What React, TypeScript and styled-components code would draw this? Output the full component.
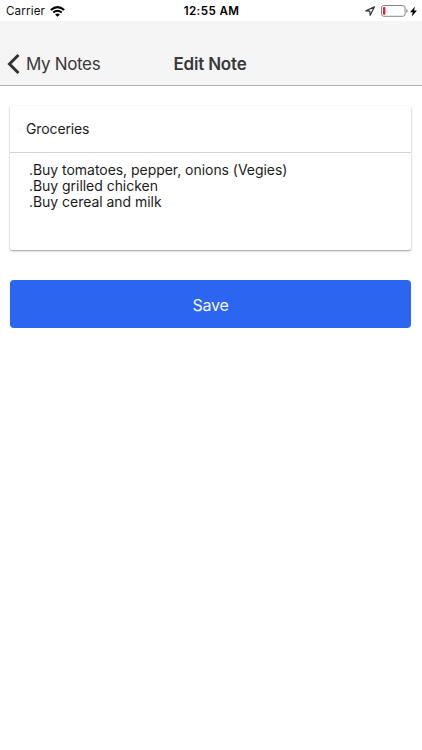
import React from "react";
import styled, { createGlobalStyle } from "styled-components";

const GlobalStyle = createGlobalStyle`
  * { box-sizing: border-box; }
  html, body { margin: 0; background: #fff; }
  body { font-family: Inter, "Liberation Sans", sans-serif; color: #1c1c1c; overflow: hidden; }
  button, input, textarea { font: inherit; color: inherit; letter-spacing: inherit; }
`;

const Screen = styled.div`
  width: 422px;
  height: 750px;
  background: #fff;
  display: flex;
  flex-direction: column;
`;

const StatusBar = styled.div`
  height: 21px;
  display: grid;
  grid-template-columns: 1fr auto 1fr;
  align-items: center;
  padding: 1px 5px 0 6px;
  font-size: 11.6px;
  line-height: 20px;
  color: #111;
`;

const StatusGroup = styled.div<{ $end?: boolean; $gap: number }>`
  display: flex;
  align-items: center;
  gap: ${(p) => p.$gap}px;
  justify-content: ${(p) => (p.$end ? "flex-end" : "flex-start")};
`;

const Carrier = styled.span`
  letter-spacing: 0.15px;
`;

const Clock = styled.span`
  font-weight: 600;
  color: #000;
  letter-spacing: 0.4px;
`;

const Header = styled.header`
  height: 65px;
  background: #f5f5f5;
  border-bottom: 1px solid #b2b2b2;
  display: grid;
  grid-template-columns: 1fr auto 1fr;
  align-items: center;
  padding: 21px 9px 0 7px;
  color: #393939;
`;

const BackButton = styled.button`
  display: flex;
  align-items: center;
  gap: 6px;
  border: 0;
  padding: 0;
  background: none;
  font-size: 17px;
  line-height: 22px;
  letter-spacing: -0.35px;
`;

const Title = styled.h1`
  margin: 0;
  font-size: 17px;
  line-height: 22px;
  font-weight: 600;
  letter-spacing: -0.2px;
`;

const Content = styled.main`
  padding: 20px 11px 0 10px;
  display: flex;
  flex-direction: column;
  gap: 30.5px;
`;

const NoteCard = styled.section`
  height: 143.5px;
  border-radius: 2px;
  background: #fff;
  box-shadow: 0 1px 2px rgba(0, 0, 0, 0.4);
  display: flex;
  flex-direction: column;
`;

const NoteTitle = styled.input`
  height: 47px;
  border: 0;
  border-bottom: 1px solid #d2d2d2;
  border-radius: 2px 2px 0 0;
  padding: 0 16px 2px;
  background: transparent;
  font-size: 14px;
  letter-spacing: -0.12px;
  outline: 0;
`;

const NoteBody = styled.textarea`
  flex: 1;
  border: 0;
  resize: none;
  outline: 0;
  overflow: hidden;
  background: transparent;
  padding: 9px 18px 9px 19px;
  font-size: 14px;
  line-height: 16.2px;
  letter-spacing: -0.04px;
`;

const SaveButton = styled.button`
  height: 48px;
  border: 0;
  border-radius: 4px;
  background: #2b65f0;
  color: #f4f8ff;
  font-size: 16px;
  line-height: 20px;
  letter-spacing: -0.25px;
  padding: 2px 0 0;
`;

const Wifi = () => (
  <svg width="15" height="11" viewBox="0 0 15 11" fill="none" stroke="#000">
    <path d="M.8 4Q7.5-1.8 14.2 4" strokeWidth="2" />
    <path d="M3.2 6.5q4.3-3.6 8.6 0" strokeWidth="1.8" />
    <path d="M7.5 10.8 5.1 8.4q2.4-1.9 4.8 0z" fill="#000" stroke="none" />
  </svg>
);

const Location = () => (
  <svg width="13" height="10" viewBox="0 0 13 10" fill="none" stroke="#333" strokeWidth="1.2">
    <path d="M9.5.8.9 4.9l3.9.3.4 4z" strokeLinejoin="round" />
  </svg>
);

const Battery = () => (
  <svg width="27" height="12" viewBox="0 0 27 12">
    <rect x=".5" y=".5" width="23.6" height="10.8" rx="2.4" fill="#fff" stroke="#858585" />
    <rect x="2" y="2" width="2.4" height="7.8" rx=".8" fill="#f21f2b" />
    <path d="M25.3 4q1.4.4 1.4 1.9t-1.4 1.9z" fill="#8c8c8c" />
  </svg>
);

const Bolt = () => (
  <svg width="7" height="11" viewBox="0 0 7 11">
    <path d="M4.9.5.1 6.2h2.6l-.8 4.3L6.9 4.6H4.1z" fill="#000" />
  </svg>
);

const Chevron = () => (
  <svg width="13" height="20" viewBox="0 0 13 20" fill="none" stroke="#333" strokeWidth="3">
    <path d="M11.5 1 2.5 10l9 9" />
  </svg>
);

const note = {
  title: "Groceries",
  body: ".Buy tomatoes, pepper, onions (Vegies)\n.Buy grilled chicken\n.Buy cereal and milk",
};

export default function App() {
  return (
    <>
      <GlobalStyle />
      <Screen>
        <StatusBar>
          <StatusGroup $gap={5}>
            <Carrier>Carrier</Carrier>
            <Wifi />
          </StatusGroup>
          <Clock>12:55 AM</Clock>
          <StatusGroup $end $gap={2.5}>
            <Location />
            <Battery />
            <Bolt />
          </StatusGroup>
        </StatusBar>
        <Header>
          <BackButton>
            <Chevron />
            My Notes
          </BackButton>
          <Title>Edit Note</Title>
        </Header>
        <Content>
          <NoteCard>
            <NoteTitle defaultValue={note.title} aria-label="Title" />
            <NoteBody defaultValue={note.body} aria-label="Note" spellCheck={false} />
          </NoteCard>
          <SaveButton>Save</SaveButton>
        </Content>
      </Screen>
    </>
  );
}
